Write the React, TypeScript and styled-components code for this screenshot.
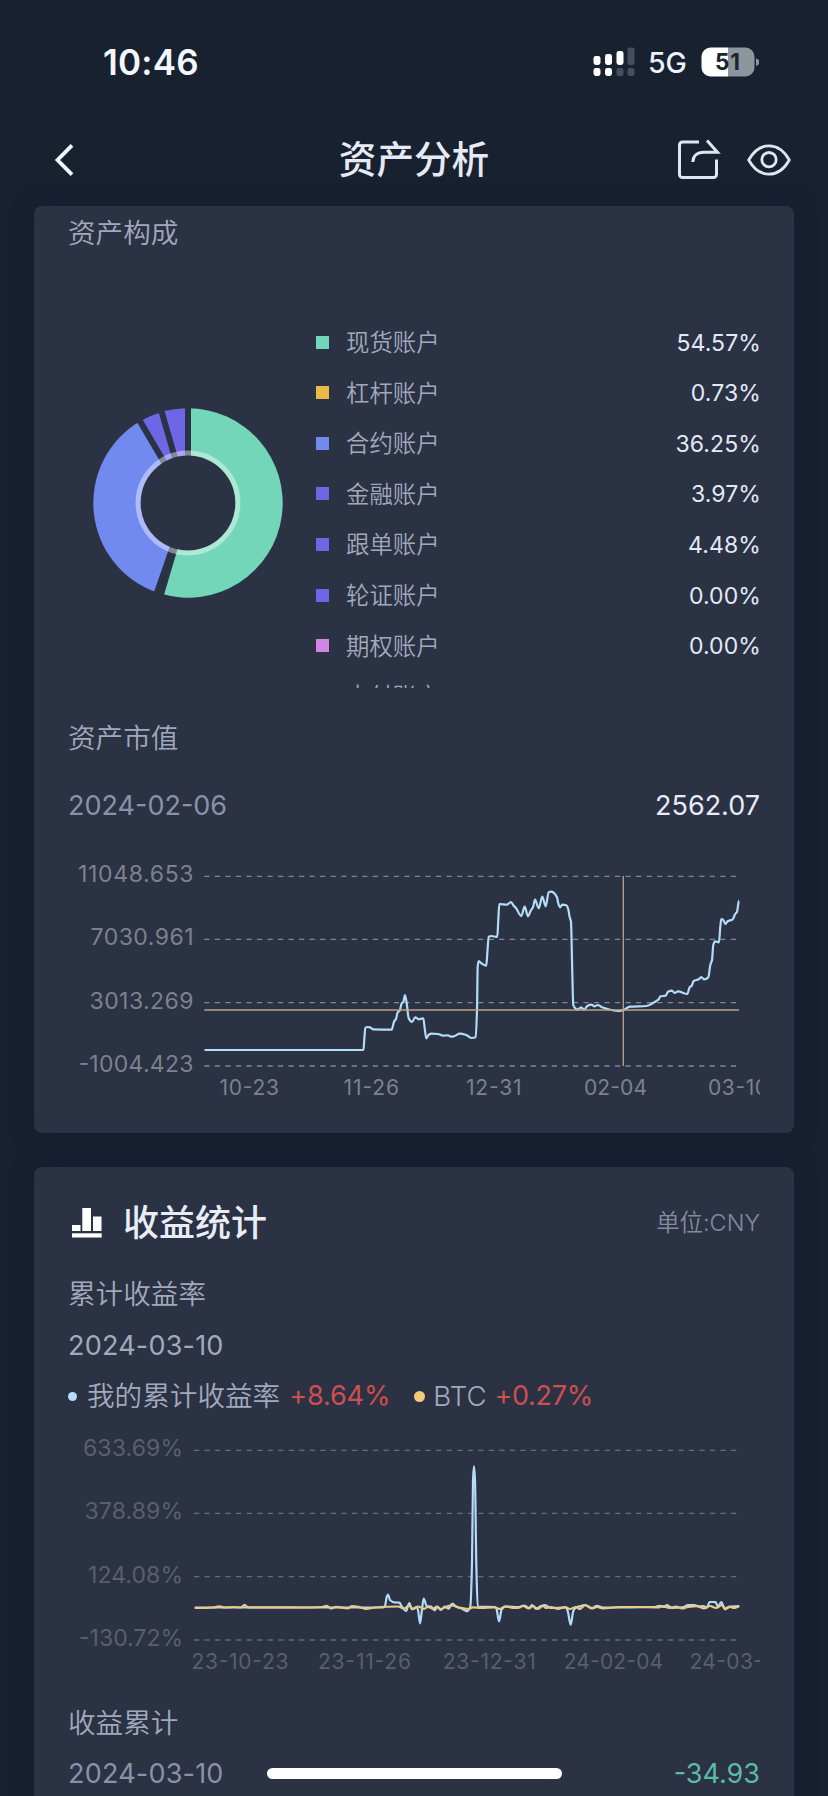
import React from "react";
import styled, { createGlobalStyle } from "styled-components";

const CARD = "#2a3244";
const FONT = `Inter, "Noto Sans CJK SC", sans-serif`;

const Global = createGlobalStyle`
  * { box-sizing: border-box; }
  html, body { margin: 0; padding: 0; background: #172130; }
  body { font-family: ${FONT}; overflow: hidden; }
`;

const Screen = styled.main`
  position: relative;
  width: 828px;
  height: 1796px;
  overflow: hidden;
  display: flex;
  flex-direction: column;
  background: #172130;
`;

const StatusBar = styled.header`
  height: 114px;
  flex: none;
  display: flex;
  align-items: center;
  justify-content: space-between;
  padding: 9px 69px 0 103px;
`;

const Clock = styled.time`
  font-size: 35px;
  font-weight: 600;
  line-height: 40px;
  letter-spacing: 0.2px;
  color: #f4f7fd;
`;

const StatusIcons = styled.div`
  display: flex;
  align-items: center;
`;

const Network = styled.span`
  margin: 2px 15px 0 13px;
  width: 38px;
  font-size: 28.5px;
  line-height: 32px;
  font-weight: 450;
  white-space: nowrap;
  color: #eef2fa;
`;

const NavBar = styled.nav`
  height: 92px;
  flex: none;
  display: grid;
  grid-template-columns: 1fr auto 1fr;
  align-items: center;
  padding: 0 37px;
`;

const BackIcon = styled.svg`
  margin-left: 16px;
`;

const NavTitle = styled.h1`
  margin: 0;
  font-size: 37.6px;
  line-height: 48px;
  font-weight: 500;
  color: #e6eaf5;
`;

const NavActions = styled.div`
  display: flex;
  align-items: center;
  justify-content: flex-end;
  gap: 26px;
`;

const Content = styled.div`
  flex: 1;
  display: flex;
  flex-direction: column;
  gap: 34px;
  padding: 0 34px;
`;

const Card = styled.section<{ $height: number; $padTop: number }>`
  flex: none;
  height: ${(p) => p.$height}px;
  padding: ${(p) => p.$padTop}px 34px 0;
  border-radius: 8px;
  background: ${CARD};
  box-shadow: 0 0 22px rgba(20, 29, 54, 0.7);
`;

const SectionTitle = styled.h2<{ $top?: number }>`
  margin: ${(p) => p.$top ?? 0}px 0 0;
  height: 40px;
  line-height: 40px;
  font-size: 27.6px;
  font-weight: 350;
  color: #a3a9bd;
`;

const Row = styled.div<{ $top: number }>`
  display: flex;
  align-items: center;
  justify-content: space-between;
  margin-top: ${(p) => p.$top}px;
  height: 40px;
`;

const Figure = styled.span<{ $color: string; $spacing?: number }>`
  font-size: 27px;
  line-height: 40px;
  font-weight: 380;
  white-space: nowrap;
  letter-spacing: ${(p) => p.$spacing ?? 0}px;
  color: ${(p) => p.$color};
`;

const Composition = styled.div`
  display: flex;
  align-items: center;
  height: 371px;
  margin-top: 64px;
  padding-left: 24.5px;
  overflow: hidden;
`;

const Legend = styled.ul`
  align-self: flex-start;
  flex: 1;
  list-style: none;
  margin: 0 0 0 33.5px;
  padding: 0;
`;

const LegendItem = styled.li`
  display: flex;
  align-items: center;
  height: 50.56px;
`;

const Swatch = styled.i<{ $color: string }>`
  width: 13px;
  height: 13px;
  background: ${(p) => p.$color};
`;

const LegendName = styled.span`
  margin: 2px 0 0 17px;
  flex: 1;
  font-size: 23.4px;
  line-height: 36px;
  font-weight: 350;
  color: #a3a9bd;
`;

const LegendValue = styled.span`
  font-size: 23px;
  line-height: 36px;
  letter-spacing: 0.1px;
  margin: 1px -1px 0 0;
  color: #e3e9f6;
`;

const Chart = styled.svg<{ $top: number }>`
  display: block;
  margin-top: ${(p) => p.$top}px;
  overflow: hidden;
  font-family: ${FONT};
`;

const CardHead = styled.div`
  display: flex;
  align-items: center;
  height: 50px;
`;

const CardTitle = styled.h2`
  margin: -1px 0 0 19px;
  flex: 1;
  font-size: 36px;
  line-height: 50px;
  font-weight: 500;
  color: #e8ecf6;
`;

const Unit = styled.span`
  margin-top: -4px;
  font-size: 23.4px;
  font-weight: 350;
  color: #858b9f;
`;

const SeriesRow = styled.div`
  display: flex;
  align-items: center;
  height: 40px;
  margin-top: 10px;
`;

const Dot = styled.i<{ $size: number; $color: string; $left?: number }>`
  flex: none;
  width: ${(p) => p.$size}px;
  height: ${(p) => p.$size}px;
  margin-left: ${(p) => p.$left ?? 0}px;
  border-radius: 50%;
  background: ${(p) => p.$color};
`;

const SeriesName = styled.span<{ $left: number; $right: number }>`
  margin: 0 ${(p) => p.$right}px 0 ${(p) => p.$left}px;
  font-size: 27.6px;
  line-height: 40px;
  font-weight: 350;
  white-space: nowrap;
  color: #a3a9bd;
`;

const HomeIndicator = styled.div`
  position: absolute;
  left: 267px;
  bottom: 17px;
  width: 295px;
  height: 11px;
  border-radius: 6px;
  background: #fff;
`;

const accounts = [
  { name: "现货账户", share: 54.57, color: "#73d6b8" },
  { name: "杠杆账户", share: 0.73, color: "#e9b949" },
  { name: "合约账户", share: 36.25, color: "#728af0" },
  { name: "金融账户", share: 3.97, color: "#6d66e5" },
  { name: "跟单账户", share: 4.48, color: "#6d66e5" },
  { name: "轮证账户", share: 0, color: "#6d66e5" },
  { name: "期权账户", share: 0, color: "#d285e5" },
  { name: "支付账户", share: 0, color: "#73d6b8" },
];

function Donut() {
  const c = 95;
  const R = 94.7;
  const at = (pct: number, r: number) => {
    const a = (pct / 100) * Math.PI * 2;
    return [c + r * Math.sin(a), c - r * Math.cos(a)];
  };
  let sum = 0;
  const slices = accounts
    .filter((a) => a.share > 0)
    .map((a) => {
      const start = sum;
      sum += a.share;
      const [x1, y1] = at(start, R);
      const [x2, y2] = at(sum, R);
      const large = a.share > 50 ? 1 : 0;
      return { start, color: a.color, d: `M${c} ${c}L${x1} ${y1}A${R} ${R} 0 ${large} 1 ${x2} ${y2}Z` };
    });
  return (
    <svg width="190" height="190" viewBox="0 0 190 190">
      {slices.map((s) => (
        <path key={s.start} d={s.d} fill={s.color} />
      ))}
      {slices.map((s) => {
        const [x, y] = at(s.start, R + 4);
        return <line key={s.start} x1={c} y1={c} x2={x} y2={y} stroke={CARD} strokeWidth="6" />;
      })}
      <circle cx={c} cy={c} r="47.4" fill={CARD} />
      <circle cx={c} cy={c} r="49.9" fill="none" stroke="#fff" strokeOpacity="0.42" strokeWidth="5" />
    </svg>
  );
}

type Tick = { text: string; y: number; x: number };
type Label = { text: string; x: number; w: number };

function Axes(p: {
  ticks: Tick[];
  labels: Label[];
  right: number;
  from: number;
  to: number;
  baseline: number;
  line: string;
  ink: string;
}) {
  return (
    <>
      {p.ticks.map((t) => (
        <React.Fragment key={t.text}>
          <line
            x1={p.from}
            x2={p.to}
            y1={t.y}
            y2={t.y}
            stroke={p.line}
            strokeWidth="1.3"
            strokeDasharray="5.2 5.33"
          />
          <text x={t.x} y={t.y + 5.8} textLength={p.right - t.x} fontSize="23" fill={p.ink}>
            {t.text}
          </text>
        </React.Fragment>
      ))}
      {p.labels.map((l) => (
        <text key={l.text} x={l.x} y={p.baseline} textLength={l.w} fontSize="21" fill={p.ink}>
          {l.text}
        </text>
      ))}
    </>
  );
}

// Monotone cubic through the points, so peaks are rounded without overshoot.
function smooth(points: string) {
  const pts = points.split(" ").map((p) => p.split(",").map(Number));
  const slope = (i: number) => (pts[i + 1][1] - pts[i][1]) / (pts[i + 1][0] - pts[i][0]);
  const tangent = pts.map((_, i) => {
    if (i === 0 || i === pts.length - 1) return 0;
    const a = slope(i - 1);
    const b = slope(i);
    return a * b <= 0 ? 0 : (2 * a * b) / (a + b);
  });
  let d = `M${pts[0][0]} ${pts[0][1]}`;
  for (let i = 1; i < pts.length; i++) {
    const [x0, y0] = pts[i - 1];
    const [x1, y1] = pts[i];
    const h = (x1 - x0) / 3;
    d += `C${x0 + h} ${y0 + h * tangent[i - 1]} ${x1 - h} ${y1 - h * tangent[i]} ${x1} ${y1}`;
  }
  return d;
}

const assetLine = smooth(
  "204.5,1050 363.5,1050 364.3,1039 365.3,1028 367.7,1027 370,1027.3 373.3,1029.3 391.7,1029.7 394,1021.7 396,1019 397.7,1012.3 399.7,1010.7 401.7,1003.3 403.3,1002 405,995 406.7,1003.3 408.7,1018.3 412,1022 415.3,1017.3 418.7,1019.3 423.3,1018.3 424.7,1028.3 426.3,1038.3 429,1034.5 431.3,1033.7 438,1034 443,1035.7 448,1035.3 451.3,1036.7 454.7,1036 459.7,1033.7 466.3,1035 471.3,1038 475.7,1037.3 477,1010 477.7,966.7 478.7,961 481.3,963.3 486.3,965.7 487.3,953.3 488.7,936.7 491.3,936 497.3,937 498.3,920 499.3,904 507,904.7 511,902 513.3,905.3 516,908 521.3,916 524.7,906.7 528,916.3 530.7,910.7 533,907.3 535,899.7 538.7,908.3 542.3,896.7 545.7,906.3 548.7,892.3 551.3,891.7 553.7,892.7 557,897.3 558.3,903.3 560,907.3 562.3,904.7 566.3,905.3 568.3,909.3 569.7,917.3 571,921.7 572,960 573.3,1005 575,1008 577.7,1009.7 581,1007.3 584.3,1009.7 587.3,1006 591.3,1004.7 594.7,1006.3 597.7,1005 602,1007.3 611.3,1010 618,1011 623.3,1010 630,1006.7 646.3,1006 654.7,1002 658.7,999.3 660.3,996.3 665.7,995.7 668,991.7 672,990.7 674.7,993 678,991.3 687.3,994 689.7,987.3 691.7,985.7 693.7,981 698.7,979.3 701.3,977 704,979.3 708.3,977.3 710.3,965 712,960 713.3,945 715,941.3 719,942.3 720.3,926.7 721.3,919 723.3,920 725.3,924 727.7,921.3 732.7,919.3 735,914.3 737,911.7 739,900.7"
);

const mineLine = smooth(
  "194.7,1607.5 383,1607.5 385,1606 386.7,1597 388,1594.5 390,1600 394,1602.3 399.3,1602.7 402,1606.7 406,1611 409.3,1603.2 412,1609.3 416.7,1607 418,1610 420,1623.3 421.7,1612 423.7,1598.5 426.7,1606 431,1606.5 434.7,1610.3 437.3,1606.7 440.7,1610 444.7,1606.7 448.7,1608.7 452.3,1603.5 456.3,1606.7 461.3,1608.3 467,1611.3 470.3,1606.7 472,1563 473,1480 474,1466 475,1480 476.3,1563 477.7,1606.7 495,1607 496.3,1608 499,1621.3 501.7,1609.3 506,1606.5 519,1607 524,1605.5 529,1608 532,1605 536,1609 541,1606 545,1605.2 551,1608 566,1607.5 567.7,1611 570.7,1624.7 573.3,1611 576,1607.5 581,1606 585,1605 592,1608 597,1605.8 603,1607.5 655,1607 660,1605.8 664,1607 667,1605.2 672,1608 684,1607 688,1605 694,1605 699,1606.5 703,1606 707,1607.5 709.5,1602 715.5,1602 718,1606.7 721.3,1602 724.7,1608.5 730,1606.5 739.3,1606"
);

const btcLine = smooth(
  "194.7,1608 214,1607.5 219,1606.3 225,1607.5 234,1607 241,1607.5 244.5,1604.8 248,1607.3 280,1607.3 300,1607.5 322,1607 327,1605.8 330.5,1608.5 336,1606.8 348,1608.3 352,1606 360,1607.3 366,1609 375,1607.5 398,1606.5 404,1608.5 409,1605.5 413,1609 418,1606.5 424,1608.8 428,1607 433,1608.8 437,1606.5 441,1609 447,1606.5 452,1605.3 459,1607.5 468,1609 473,1607.3 481,1608 495,1607.5 500,1609 505,1606.3 512,1607.8 518,1608 523,1606 529,1608.5 533,1606 538,1609 543,1606 546,1608 551,1607 558,1608.8 565,1607 570,1609 576,1607 580,1609 585,1605.2 592,1608.5 597,1607 603,1608.5 620,1607 640,1607 658,1607.5 663,1606 669,1608 676,1606.5 682,1608.5 688,1607 697,1606.2 704,1608.5 710,1606 716,1608 722,1605 725,1609.3 730,1606.8 734,1608 739.3,1606.5"
);

function AssetChart() {
  return (
    <Chart $top={19} width="692" height="260" viewBox="68 845 692 260">
      <Axes
        ticks={[
          { text: "11048.653", y: 876.3, x: 78 },
          { text: "7030.961", y: 939.4, x: 90.5 },
          { text: "3013.269", y: 1002.7, x: 89.5 },
          { text: "-1004.423", y: 1066, x: 78.5 },
        ]}
        labels={[
          { text: "10-23", x: 219.5, w: 59.5 },
          { text: "11-26", x: 343.5, w: 55.5 },
          { text: "12-31", x: 466, w: 55.5 },
          { text: "02-04", x: 584, w: 63 },
          { text: "03-10", x: 708, w: 60 },
        ]}
        right={193.5}
        from={204.3}
        to={736}
        baseline={1095}
        line="#80869a"
        ink="#7d818e"
      />
      <path d={assetLine} fill="none" stroke="#b4dcf8" strokeWidth="2.2" strokeLinejoin="round" />
      <path d="M204.3 1010H739M623.3 876V1066" stroke="#bda284" strokeWidth="1.3" fill="none" />
    </Chart>
  );
}

function ReturnChart() {
  return (
    <Chart $top={14} width="692" height="260" viewBox="68 1430 692 260">
      <Axes
        ticks={[
          { text: "633.69%", y: 1450.3, x: 83 },
          { text: "378.89%", y: 1513.4, x: 84.5 },
          { text: "124.08%", y: 1576.7, x: 88 },
          { text: "-130.72%", y: 1640, x: 79 },
        ]}
        labels={[
          { text: "23-10-23", x: 191.5, w: 97 },
          { text: "23-11-26", x: 318, w: 93 },
          { text: "23-12-31", x: 442.7, w: 93 },
          { text: "24-02-04", x: 563.7, w: 99.5 },
          { text: "24-03-10", x: 689.5, w: 96 },
        ]}
        right={183}
        from={194}
        to={736.5}
        baseline={1669}
        line="#666c7d"
        ink="#5b5f6d"
      />
      <path d={mineLine} fill="none" stroke="#b4dcf8" strokeWidth="2.2" strokeLinejoin="round" />
      <path d={btcLine} fill="none" stroke="#ecca85" strokeWidth="2.2" strokeLinejoin="round" />
    </Chart>
  );
}

function Signal() {
  return (
    <svg width="42" height="30" viewBox="0 0 42 30">
      <g fill="#fff">
        <rect x="0.5" y="9" width="7" height="9" rx="2.4" />
        <rect x="12" y="7" width="7" height="11" rx="2.4" />
        <rect x="23.5" y="4" width="7" height="14" rx="2.4" />
        <rect x="0.5" y="21" width="7" height="8" rx="2.4" />
        <rect x="12" y="21" width="7" height="8" rx="2.4" />
      </g>
      <g fill="#464e5d">
        <rect x="34.5" y="0.5" width="7" height="17.5" rx="2" />
        <rect x="23.5" y="21" width="7" height="8" rx="2" />
        <rect x="34.5" y="21" width="7" height="8" rx="2" />
      </g>
    </svg>
  );
}

function Battery() {
  return (
    <svg width="58" height="30" viewBox="0 0 58 30" fontFamily="Inter, sans-serif">
      <path d="M27 0.5H9.5a9 9 0 0 0-9 9v11a9 9 0 0 0 9 9H27z" fill="#fff" />
      <path d="M27 0.5H44.5a9 9 0 0 1 9 9v11a9 9 0 0 1-9 9H27z" fill="#8f959d" />
      <path d="M55 11.5c2.6.6 3.5 2 3.5 3.7s-.9 3.1-3.5 3.7z" fill="#8f959d" />
      <text x="14" y="23" textLength="25" fontSize="22.5" fontWeight="700" fill="#1b2430">
        51
      </text>
    </svg>
  );
}

export default function App() {
  return (
    <Screen>
      <Global />
      <StatusBar>
        <Clock>10:46</Clock>
        <StatusIcons>
          <Signal />
          <Network>5G</Network>
          <Battery />
        </StatusIcons>
      </StatusBar>
      <NavBar>
        <BackIcon width="22" height="34" viewBox="0 0 22 34" fill="none" stroke="#f2f5fb" strokeWidth="3.8">
          <path d="M19 2.3L4.5 17l14.5 14.7" />
        </BackIcon>
        <NavTitle>资产分析</NavTitle>
        <NavActions>
          <svg width="44" height="42" viewBox="0 0 44 42" fill="none" stroke="#dfe6f2" strokeWidth="3">
            <path d="M22 3H5.5A3 3 0 0 0 2.5 6V35.5a3 3 0 0 0 3 3H36.5a3 3 0 0 0 3-3V20.5" />
            <path d="M30 1.5L40.5 13.3H27C20 13.3 16 17 15.8 23" />
          </svg>
          <svg width="44" height="32" viewBox="0 0 44 32" fill="none" stroke="#dfe6f2" strokeWidth="2.8">
            <path d="M1.7 16C7 6.5 14 1.8 22 1.8S37 6.5 42.3 16C37 25.5 30 30.2 22 30.2S7 25.5 1.7 16z" />
            <circle cx="22" cy="15.7" r="7.2" />
          </svg>
        </NavActions>
      </NavBar>
      <Content>
        <Card $height={927} $padTop={7}>
          <SectionTitle>资产构成</SectionTitle>
          <Composition>
            <Donut />
            <Legend>
              {accounts.map((a) => (
                <LegendItem key={a.name}>
                  <Swatch $color={a.color} />
                  <LegendName>{a.name}</LegendName>
                  <LegendValue>{a.share.toFixed(2)}%</LegendValue>
                </LegendItem>
              ))}
            </Legend>
          </Composition>
          <SectionTitle $top={30}>资产市值</SectionTitle>
          <Row $top={28}>
            <Figure $color="#8b91a6">2024-02-06</Figure>
            <Figure $color="#e6ebf7">2562.07</Figure>
          </Row>
          <AssetChart />
        </Card>
        <Card $height={700} $padTop={31}>
          <CardHead>
            <svg width="36" height="32" viewBox="0 0 36 32" fill="#fff">
              <rect x="4" y="18" width="8.5" height="6" />
              <rect x="14.3" y="1" width="8.7" height="23" />
              <rect x="25" y="9.5" width="8.5" height="14.5" />
              <rect x="4" y="26.3" width="29.7" height="4.2" />
            </svg>
            <CardTitle>收益统计</CardTitle>
            <Unit>单位:CNY</Unit>
          </CardHead>
          <SectionTitle $top={26}>累计收益率</SectionTitle>
          <Row $top={12}>
            <Figure $color="#a3a9bd" $spacing={0.2}>2024-03-10</Figure>
          </Row>
          <SeriesRow>
            <Dot $size={9} $color="#b5ddf8" />
            <SeriesName $left={10} $right={9}>我的累计收益率</SeriesName>
            <Figure $color="#cf4f4f" $spacing={-0.1}>+8.64%</Figure>
            <Dot $size={11} $color="#f2cc76" $left={24} />
            <SeriesName $left={8} $right={8}>BTC</SeriesName>
            <Figure $color="#cf4f4f" $spacing={-0.3}>+0.27%</Figure>
          </SeriesRow>
          <ReturnChart />
          <SectionTitle $top={13}>收益累计</SectionTitle>
          <Row $top={11}>
            <Figure $color="#8b91a6" $spacing={0.2}>2024-03-10</Figure>
            <Figure $color="#5cbaa7">-34.93</Figure>
          </Row>
        </Card>
      </Content>
      <HomeIndicator />
    </Screen>
  );
}
